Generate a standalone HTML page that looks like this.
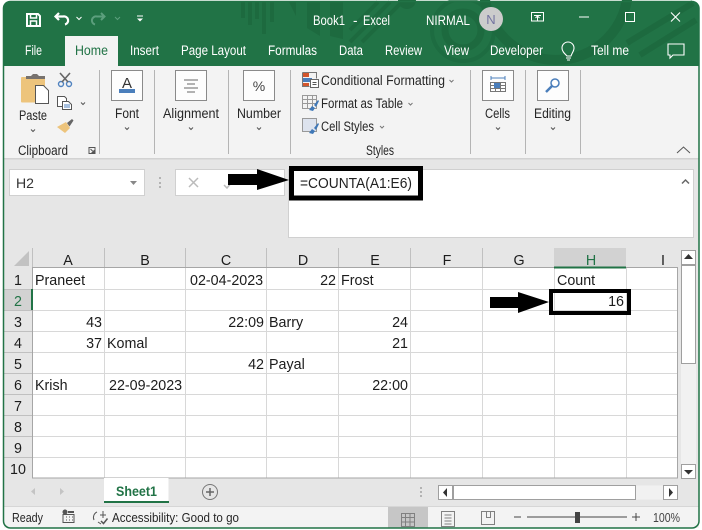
<!DOCTYPE html>
<html><head><meta charset="utf-8"><style>
html,body{margin:0;padding:0;background:#fff}
svg{display:block}
text{font-family:"Liberation Sans",sans-serif;font-size:13.5px;fill:#262626}
.w{fill:#fff}
.c{font-size:14.3px;fill:#1c1c1c}
.m{text-anchor:middle}
.e{text-anchor:end}
</style></head><body>
<svg width="702" height="530" viewBox="0 0 702 530" xmlns="http://www.w3.org/2000/svg">
<rect x="3" y="1" width="696" height="527" rx="7" fill="#217346"/>
<rect x="4" y="66" width="695" height="461" fill="#e6e6e6"/>
<g fill="#1d6a3f">
<rect x="241" y="2" width="4" height="16"/><rect x="248" y="2" width="4" height="23"/><rect x="255" y="2" width="4" height="17"/><rect x="262" y="2" width="4" height="32"/><rect x="270" y="2" width="4" height="20"/>
<path d="M289 2h7v14zM307 2h13v34l-13-8zM330 2h13v37l-13-3z"/>
</g>
<g fill="none" stroke="#1d6a3f">
<path d="M350 30L378 2M350 42L390 2M362 42L400 4" stroke-width="4"/>
<circle cx="407" cy="0" r="9" fill="#1d6a3f" stroke="none"/>
<circle cx="463" cy="30" r="18" stroke-width="7"/><circle cx="463" cy="30" r="31" stroke-width="4" opacity=".7"/>
<circle cx="556" cy="-12" r="72" stroke-width="10"/>
<path d="M627 43L693 3M640 55L696 20" stroke-width="6"/>
</g>
<rect x="65" y="36" width="53" height="30" fill="#f3f3f3"/>
<!-- title bar icons -->
<g fill="none" stroke="#fff" stroke-width="2">
<path d="M27 14h11l2 2v10H27z"/><path d="M30.500 14v4h6v-4M30.500 26v-5h6v5" stroke-width="1.500"/>
<path d="M59 13l-3.500 3.500L59 20" stroke-width="2.200"/><path d="M56 16.500h7a4 4 0 0 1 2 8" stroke-width="2.200"/>
<path d="M76.500 17l2.500 2.500 2.500-2.500" stroke-width="1"/>
<g stroke="#5c9f7d"><path d="M101 13l3.500 3.500L101 20"/><path d="M104 16.500h-7a4 4 0 0 0-2 8"/><path d="M115 17l2.500 2.500 2.500-2.500" stroke-width="1"/></g>
<path d="M137 16h6" stroke-width="1"/><path d="M137 18.500h6l-3 3z" fill="#fff" stroke="none"/>
<rect x="531.500" y="12.500" width="12" height="8.500" stroke-width="1"/><path d="M534 15.500h7M537.500 21v-5M535.500 18l2-2 2 2" stroke-width="1"/>
<path d="M579 17h10" stroke-width="1"/><rect x="625.500" y="12.500" width="9" height="9" stroke-width="1"/>
<path d="M671 12.500l9 9M680 12.500l-9 9" stroke-width="1.100"/>
<path d="M567 56c-3-3-5-5-5-8a6 6 0 0 1 12 0c0 3-2 5-3 8z M566 58h5M567 60h3" stroke-width="1.100"/>
<path d="M668 44h16v11h-11l-3 3v-3h-2z" stroke-width="1.100"/>
</g>
<text class="w" x="313" y="25" textLength="32" lengthAdjust="spacingAndGlyphs">Book1</text>
<text class="w" x="353" y="25">-</text>
<text class="w" x="363" y="25" textLength="27" lengthAdjust="spacingAndGlyphs">Excel</text>
<text class="w" x="426" y="25" textLength="44" lengthAdjust="spacingAndGlyphs">NIRMAL</text>
<circle cx="491" cy="19" r="12" fill="#cccccc"/><text x="491" y="24" class="m" style="fill:#7474a0;font-size:13px">N</text>
<text class="w" x="25" y="55" textLength="17" lengthAdjust="spacingAndGlyphs">File</text>
<text x="75" y="55" textLength="33" lengthAdjust="spacingAndGlyphs" style="fill:#217346">Home</text>
<text class="w" x="130" y="55" textLength="29" lengthAdjust="spacingAndGlyphs">Insert</text>
<text class="w" x="181" y="55" textLength="65" lengthAdjust="spacingAndGlyphs">Page Layout</text>
<text class="w" x="268" y="55" textLength="49" lengthAdjust="spacingAndGlyphs">Formulas</text>
<text class="w" x="339" y="55" textLength="24" lengthAdjust="spacingAndGlyphs">Data</text>
<text class="w" x="385" y="55" textLength="37" lengthAdjust="spacingAndGlyphs">Review</text>
<text class="w" x="444" y="55" textLength="25" lengthAdjust="spacingAndGlyphs">View</text>
<text class="w" x="490" y="55" textLength="53" lengthAdjust="spacingAndGlyphs">Developer</text>
<text class="w" x="591" y="55" textLength="38" lengthAdjust="spacingAndGlyphs">Tell me</text>
<!-- ribbon -->
<rect x="4" y="66" width="695" height="92" fill="#f3f3f3"/>
<rect x="4" y="158" width="695" height="1.500" fill="#d2d2d2"/>
<g fill="#b4b4b4"><rect x="99" y="70" width="1" height="84"/><rect x="154" y="70" width="1" height="84"/><rect x="228" y="70" width="1" height="84"/><rect x="290" y="70" width="1" height="84"/><rect x="470" y="70" width="1" height="84"/><rect x="525" y="70" width="1" height="84"/><rect x="580" y="70" width="1" height="84"/></g>
<g fill="#fdfdfd" stroke="#8a8a8a"><rect x="111.500" y="70.500" width="31" height="30"/><rect x="175.500" y="70.500" width="31" height="30"/><rect x="243.500" y="70.500" width="31" height="30"/><rect x="482.500" y="70.500" width="31" height="30"/><rect x="537.500" y="70.500" width="31" height="30"/></g>
<!-- paste -->
<rect x="21" y="77" width="24" height="25.500" rx="1" fill="#edc47c"/>
<path d="M26 79h19v-3h-6l-2-2h-4l-2 2h-5z" fill="#77726e"/>
<path d="M35.500 85.500h8l5 5v13h-13z" fill="#fff" stroke="#555"/>
<g fill="none" stroke="#4f82bf" stroke-width="1.400"><circle cx="61" cy="84" r="2.500"/><circle cx="69" cy="84" r="2.500"/></g>
<path d="M60 73l8 9M70 73l-8 9" stroke="#666" stroke-width="1.600" fill="none"/>
<path d="M57.500 96.500h7l2 2v3h-4v5h-5z" fill="#fff" stroke="#555"/>
<path d="M62.500 101.500h6l3 3v5h-9z" fill="#fff" stroke="#555"/>
<path d="M64 105h6M64 107h6" stroke="#4f82bf"/>
<path d="M57 127l9-5 4 6-5 5z" fill="#edc47c"/><path d="M67 123l5-4 1.500 1.500-4 6z" fill="#666"/>
<g fill="none" stroke="#555" stroke-width="1"><path d="M31 129.500l2 2 2-2M81 102.500l2 2 2-2M125 127.500l2 2 2-2M189 127.500l2 2 2-2M257 127.500l2 2 2-2M496 127.500l2 2 2-2M551 127.500l2 2 2-2"/><path d="M449.500 80l2 2 2-2M408.500 103l2 2 2-2M380 126l2 2 2-2" stroke="#777"/><path d="M89 147.500h6v6h-6zM90.500 149l3 3M94 150v2.500h-2.500"/></g>
<path d="M677 153l6.500-6 6.500 6" fill="none" stroke="#555"/>
<text x="19" y="120" textLength="28" lengthAdjust="spacingAndGlyphs">Paste</text>
<text x="18" y="155" textLength="50" lengthAdjust="spacingAndGlyphs">Clipboard</text>
<text x="115" y="118" textLength="24" lengthAdjust="spacingAndGlyphs">Font</text>
<text x="163" y="118" textLength="56" lengthAdjust="spacingAndGlyphs">Alignment</text>
<text x="237" y="118" textLength="44" lengthAdjust="spacingAndGlyphs">Number</text>
<text x="485" y="118" textLength="25" lengthAdjust="spacingAndGlyphs">Cells</text>
<text x="534" y="118" textLength="37" lengthAdjust="spacingAndGlyphs">Editing</text>
<text x="366" y="155" textLength="28" lengthAdjust="spacingAndGlyphs">Styles</text>
<text x="321" y="85" textLength="124" lengthAdjust="spacingAndGlyphs">Conditional Formatting</text>
<text x="321" y="108" textLength="82" lengthAdjust="spacingAndGlyphs">Format as Table</text>
<text x="321" y="131" textLength="53" lengthAdjust="spacingAndGlyphs">Cell Styles</text>
<!-- small ribbon icons -->
<text x="127" y="88" class="m" style="font-size:15px;fill:#333">A</text><rect x="119" y="89" width="16" height="4" fill="#4a7ebb"/>
<path d="M184 80h14M187 84h8M184 88h14M187 92h8" stroke="#666" fill="none"/>
<text x="259" y="91" class="m" style="font-size:14px;fill:#444">%</text>
<path d="M491 78h14" stroke="#4a7ebb"/><path d="M491 76v4M505 76v4" stroke="#4a7ebb"/>
<path d="M490.500 82.500h15v9h-15zM490.500 85.500h15M490.500 88.500h15M495.500 82.500v9M500.500 82.500v9" fill="#fff" stroke="#777"/><rect x="494" y="83" width="6" height="5" fill="#4a7ebb"/>
<circle cx="555" cy="83" r="4" fill="#fff" stroke="#4a7ebb" stroke-width="1.500"/><path d="M552 86l-6 6" stroke="#4a7ebb" stroke-width="2.500"/>
<!-- styles icons -->
<rect x="303" y="73" width="6" height="4" fill="#d2562e"/><rect x="303" y="78" width="9" height="4" fill="#4a7ebb"/><rect x="303" y="83" width="6" height="3" fill="#d2562e"/>
<path d="M302.500 72.500h14v6M302.500 72.500v14h7" fill="none" stroke="#777"/>
<rect x="310.500" y="79.500" width="8" height="8" fill="#fff" stroke="#666"/><path d="M312.500 82.500h4M312.500 84.500h4" stroke="#555"/>
<g fill="none" stroke="#999"><path d="M302.500 95.500h14v13h-14zM302.500 99.500h14M302.500 103.500h14M307.500 95.500v13M312.500 95.500v13"/></g>
<path d="M309 110l3-4 3 2-2 3zM314 105l4-5 1 1-3 6z" fill="#3f78b8"/>
<rect x="302.500" y="118.500" width="14" height="13" fill="#dde3ee" stroke="#999"/>
<path d="M309 133l3-4 3 2-2 3zM314 128l4-5 1 1-3 6z" fill="#3f78b8"/>
<!-- formula bar -->
<rect x="9.500" y="169.500" width="135" height="26" fill="#fff" stroke="#d0d0d0"/>
<text x="16" y="188" textLength="18" lengthAdjust="spacingAndGlyphs" style="font-size:14px;fill:#333">H2</text>
<path d="M130 181h7l-3.500 4z" fill="#888"/>
<g fill="#b3b3b3"><rect x="159" y="177" width="2" height="2"/><rect x="159" y="182" width="2" height="2"/><rect x="159" y="186" width="2" height="2"/></g>
<rect x="175.500" y="169.500" width="109" height="26" fill="#fff" stroke="#d0d0d0"/>
<path d="M189 178l9 9M198 178l-9 9" stroke="#bbb" stroke-width="1.500"/>
<path d="M224 185l3 3 5-6" stroke="#bbb" stroke-width="1.500" fill="none"/>
<rect x="288.500" y="169.500" width="405" height="68" fill="#fff" stroke="#d0d0d0"/>
<path d="M682 183.500l3.500-3.500 3.500 3.500" fill="none" stroke="#666" stroke-width="1.500"/>
<text x="300" y="188" textLength="112" lengthAdjust="spacingAndGlyphs" style="font-size:14.500px;fill:#222">=COUNTA(A1:E6)</text>
<rect x="291.500" y="168.500" width="129" height="29.500" fill="none" stroke="#000" stroke-width="5"/>
<path d="M228 174h29v-5l32 11-32 10v-5h-29z" fill="#000"/>
<!-- grid -->
<rect x="32" y="268" width="646" height="210" fill="#fff"/>
<g fill="#d8d8d8">
<rect x="32" y="289" width="646" height="1"/><rect x="32" y="310" width="646" height="1"/><rect x="32" y="331" width="646" height="1"/><rect x="32" y="352" width="646" height="1"/><rect x="32" y="373" width="646" height="1"/><rect x="32" y="394" width="646" height="1"/><rect x="32" y="415" width="646" height="1"/><rect x="32" y="436" width="646" height="1"/><rect x="32" y="457" width="646" height="1"/>
<rect x="104" y="268" width="1" height="210"/><rect x="185" y="268" width="1" height="210"/><rect x="266" y="268" width="1" height="210"/><rect x="338" y="268" width="1" height="210"/><rect x="410" y="268" width="1" height="210"/><rect x="482" y="268" width="1" height="210"/><rect x="554" y="268" width="1" height="210"/><rect x="626" y="268" width="1" height="210"/>
</g>
<!-- headers -->
<rect x="554" y="248" width="72" height="20" fill="#d2d2d2"/>
<rect x="4" y="289" width="28" height="21" fill="#d2d2d2"/>
<g fill="#c0c0c0"><rect x="32" y="248" width="1" height="20"/><rect x="104" y="248" width="1" height="20"/><rect x="185" y="248" width="1" height="20"/><rect x="266" y="248" width="1" height="20"/><rect x="338" y="248" width="1" height="20"/><rect x="410" y="248" width="1" height="20"/><rect x="482" y="248" width="1" height="20"/>
<rect x="4" y="289" width="28" height="1"/><rect x="4" y="310" width="28" height="1"/><rect x="4" y="331" width="28" height="1"/><rect x="4" y="352" width="28" height="1"/><rect x="4" y="373" width="28" height="1"/><rect x="4" y="394" width="28" height="1"/><rect x="4" y="415" width="28" height="1"/><rect x="4" y="436" width="28" height="1"/><rect x="4" y="457" width="28" height="1"/></g>
<path d="M29 251v15H14z" fill="#c2c2c2"/>
<rect x="32" y="267" width="646" height="1" fill="#a6a6a6"/>
<rect x="32" y="268" width="1" height="210" fill="#a6a6a6"/>
<rect x="32" y="477.500" width="646" height="1" fill="#a6a6a6"/>
<rect x="677" y="268" width="1" height="210" fill="#a6a6a6"/>
<rect x="554" y="266.500" width="72" height="2" fill="#217346"/>
<rect x="31" y="289" width="2" height="21" fill="#217346"/>
<g class="hd">
<text class="c m" x="68" y="265">A</text><text class="c m" x="145" y="265">B</text><text class="c m" x="226" y="265">C</text><text class="c m" x="303" y="265">D</text><text class="c m" x="375" y="265">E</text><text class="c m" x="447" y="265">F</text><text class="c m" x="519" y="265">G</text><text class="c m" x="591" y="265" style="fill:#217346">H</text><text class="c m" x="663" y="265">I</text>
<text class="c m" x="18" y="285">1</text><text class="c m" x="18" y="306" style="fill:#217346">2</text><text class="c m" x="18" y="327">3</text><text class="c m" x="18" y="348">4</text><text class="c m" x="18" y="369">5</text><text class="c m" x="18" y="390">6</text><text class="c m" x="18" y="411">7</text><text class="c m" x="18" y="432">8</text><text class="c m" x="18" y="453">9</text><text class="c m" x="18" y="474">10</text>
</g>
<text class="c" x="35" y="285">Praneet</text><text class="c" x="190" y="285">02-04-2023</text><text class="c e" x="336" y="285">22</text><text class="c" x="341" y="285">Frost</text><text class="c" x="557" y="285">Count</text>
<text class="c e" x="624" y="306">16</text>
<text class="c e" x="102" y="327">43</text><text class="c e" x="264" y="327">22:09</text><text class="c" x="269" y="327">Barry</text><text class="c e" x="408" y="327">24</text>
<text class="c e" x="102" y="348">37</text><text class="c" x="107" y="348">Komal</text><text class="c e" x="408" y="348">21</text>
<text class="c e" x="264" y="369">42</text><text class="c" x="269" y="369">Payal</text>
<text class="c" x="35" y="390">Krish</text><text class="c" x="109" y="390">22-09-2023</text><text class="c e" x="408" y="390">22:00</text>
<rect x="551" y="291" width="78" height="22" fill="none" stroke="#000" stroke-width="4"/>
<path d="M490 297h28v-5l31 10-31 11v-5h-28z" fill="#000"/>
<!-- vertical scrollbar -->
<rect x="681" y="250" width="15" height="228" fill="#f1f1f1"/>
<rect x="681.500" y="250.500" width="14" height="14" fill="#fff" stroke="#9f9f9f"/>
<rect x="681.500" y="265.500" width="14" height="98" fill="#fff" stroke="#9f9f9f"/>
<rect x="681.500" y="464.500" width="14" height="14" fill="#fff" stroke="#9f9f9f"/>
<path d="M684 259l4.500-5 4.500 5zM684 470h9l-4.500 4.500z" fill="#333"/>
<!-- sheet tabs -->
<path d="M104 478h64.500v25H104z" fill="#fff"/><rect x="104" y="501" width="65" height="2" fill="#217346"/>
<text x="116" y="496" textLength="41" lengthAdjust="spacingAndGlyphs" style="font-weight:bold;font-size:13.500px;fill:#217346">Sheet1</text>
<path d="M35 488v7l-4-3.500zM60 488v7l4-3.500z" fill="#c4c4c4"/>
<circle cx="210" cy="492" r="7.500" fill="none" stroke="#777"/><path d="M206 492h8M210 488v8" stroke="#666" stroke-width="1.500"/>
<g fill="#b3b3b3"><rect x="420" y="487" width="2" height="2"/><rect x="420" y="491" width="2" height="2"/><rect x="420" y="495" width="2" height="2"/></g>
<rect x="438.500" y="485.500" width="239" height="14" fill="#f1f1f1"/>
<rect x="438.500" y="485.500" width="14" height="14" fill="#fff" stroke="#9f9f9f"/>
<rect x="453.500" y="485.500" width="182" height="14" fill="#fff" stroke="#9f9f9f"/>
<rect x="663.500" y="485.500" width="14" height="14" fill="#fff" stroke="#9f9f9f"/>
<path d="M447 488v9l-4-4.500zM669 488v9l4-4.500z" fill="#333"/>
<!-- status bar -->
<rect x="4" y="506" width="695" height="22" fill="#f3f3f3"/><rect x="4" y="506" width="695" height="1" fill="#d6d6d6"/>
<rect x="388" y="507" width="40" height="21" fill="#c6c6c6"/>
<text x="12" y="522" textLength="31" lengthAdjust="spacingAndGlyphs" style="font-size:13px">Ready</text>
<text x="112" y="522" textLength="127" lengthAdjust="spacingAndGlyphs" style="font-size:13px">Accessibility: Good to go</text>
<circle cx="65" cy="512" r="2.500" fill="#555"/><path d="M63 514.500h11v8H63zM66 517h1M69 517h1M72 517h1M66 520h1M69 520h1M72 520h1" fill="none" stroke="#555"/><rect x="68" y="511" width="6" height="2" fill="#555"/>
<g fill="none" stroke="#555"><path d="M97 512a6 6 0 0 0-3 8M103 511v7M100 515h6M101 524l-3-2"/><path d="M101 521l2.500 2.500 4-5" stroke-width="1.500"/></g>
<g fill="none" stroke="#808080"><path d="M401.500 513.500h13v13h-13zM401.500 517.500h13M401.500 522h13M405.500 513.500v13M410 513.500v13"/>
<path d="M441.500 511.500h13v15h-13zM444.500 515h7M444.500 518h7M444.500 521h7M444.500 524h7"/>
<path d="M481.500 511.500h13v13h-13zM486.500 511.500v6h4v-6"/></g>
<path d="M514 517h7M527 517h100M632 517h8M636 513v8" stroke="#444" fill="none"/>
<rect x="575" y="512" width="5" height="11" fill="#444"/>
<text x="653" y="522" textLength="27" lengthAdjust="spacingAndGlyphs" style="font-size:13px;fill:#444">100%</text>
<!-- window outline -->
<rect x="3.500" y="1.500" width="695.500" height="526.500" rx="7" fill="none" stroke="#217346" stroke-width="1.500"/>
</svg>
</body></html>
